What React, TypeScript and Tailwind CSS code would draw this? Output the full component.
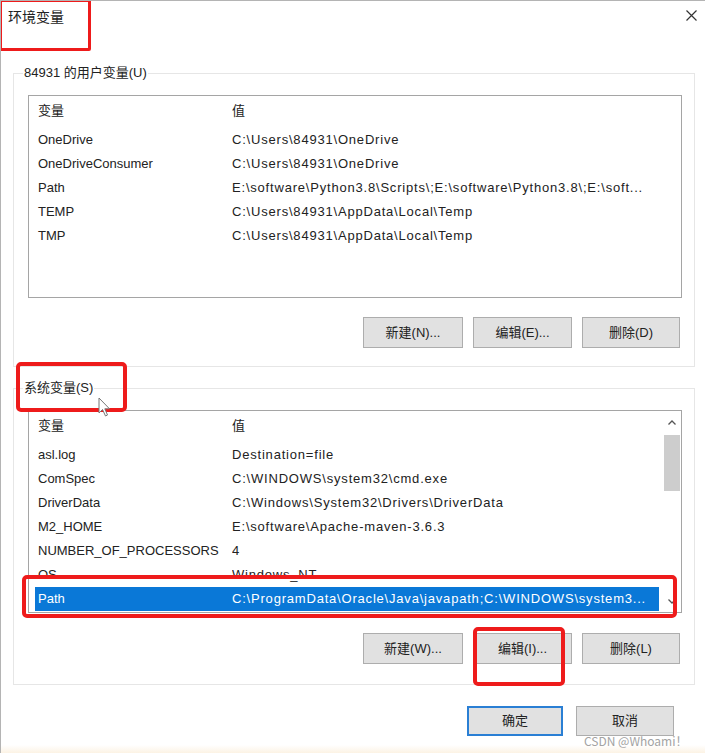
const userVars = [
  { name: "OneDrive", value: "C:\\Users\\84931\\OneDrive" },
  { name: "OneDriveConsumer", value: "C:\\Users\\84931\\OneDrive" },
  { name: "Path", value: "E:\\software\\Python3.8\\Scripts\\;E:\\software\\Python3.8\\;E:\\soft..." },
  { name: "TEMP", value: "C:\\Users\\84931\\AppData\\Local\\Temp" },
  { name: "TMP", value: "C:\\Users\\84931\\AppData\\Local\\Temp" },
];

const systemVars = [
  { name: "asl.log", value: "Destination=file" },
  { name: "ComSpec", value: "C:\\WINDOWS\\system32\\cmd.exe" },
  { name: "DriverData", value: "C:\\Windows\\System32\\Drivers\\DriverData" },
  { name: "M2_HOME", value: "E:\\software\\Apache-maven-3.6.3" },
  { name: "NUMBER_OF_PROCESSORS", value: "4" },
  { name: "OS", value: "Windows_NT" },
  { name: "Path", value: "C:\\ProgramData\\Oracle\\Java\\javapath;C:\\WINDOWS\\system3...", selected: true },
];

interface VarRow {
  name: string;
  value: string;
  selected?: boolean;
}

function ListView({ rows, scroll }: { rows: VarRow[]; scroll?: boolean }) {
  return (
    <div className="h-[203px] border border-[#a5a5a5] bg-white flex">
      <div className="flex-1 min-w-0 pt-[2px]">
        <div className="h-[26px] flex items-center ml-[6px] pl-[3px]">
          <span className="w-[194px] shrink-0">变量</span>
          <span>值</span>
        </div>
        <div className="mt-[4px]">
          {rows.map((r) => (
            <div
              key={r.name}
              className={`h-[24px] flex items-center ml-[6px] mr-[4px] pl-[3px] ${
                r.selected ? "bg-[#0a78d7] text-white" : ""
              }`}
            >
              <span className="w-[194px] shrink-0 whitespace-nowrap">{r.name}</span>
              <span className="flex-1 min-w-0 whitespace-nowrap overflow-hidden tracking-[0.8px]">{r.value}</span>
            </div>
          ))}
        </div>
      </div>
      {scroll && (
        <div className="w-[18px] shrink-0 flex flex-col items-center">
          <div className="h-[22px] flex items-center justify-center">
            <svg width="8" height="5" viewBox="0 0 8 5">
              <path d="M0.5 4.5 L4 1 L7.5 4.5" fill="none" stroke="#555" strokeWidth="1.3" />
            </svg>
          </div>
          <div className="mt-[2px] h-[56px] w-[16px] bg-[#cdcdcd]" />
          <div className="flex-1" />
          <div className="h-[22px] flex items-center justify-center">
            <svg width="8" height="5" viewBox="0 0 8 5">
              <path d="M0.5 0.5 L4 4 L7.5 0.5" fill="none" stroke="#555" strokeWidth="1.3" />
            </svg>
          </div>
        </div>
      )}
    </div>
  );
}

function Btn({ label, w = "w-[99px]" }: { label: string; w?: string }) {
  return (
    <button className={`${w} h-[31px] bg-[#e1e1e1] border border-[#adadad] text-[13px] text-[#222]`}>
      {label}
    </button>
  );
}

export default function App() {
  return (
    <div className="w-[705px] h-[753px] bg-white border-l border-t border-[#b4b4b4] relative overflow-hidden font-['Liberation_Sans','Noto_Sans_CJK_SC',sans-serif] text-[13px] text-[#222]">
      {/* title bar */}
      <div className="h-[63px] flex justify-between pl-[7px] pr-[8px] pt-[6px]">
        <span className="text-[14px] leading-[20px]">环境变量</span>
        <svg width="11" height="11" viewBox="0 0 11 11" className="mt-[3px]">
          <path d="M0.5 0.5 L10.5 10.5 M10.5 0.5 L0.5 10.5" stroke="#333" strokeWidth="1.2" />
        </svg>
      </div>

      {/* user variables */}
      <fieldset className="ml-[12px] mr-[10px] border border-[#e6e6e6] pl-[14px] pr-[12px] pt-[13px] pb-[18px]">
        <legend className="ml-[-5px] px-[1px] leading-[18px]">84931 的用户变量(U)</legend>
        <ListView rows={userVars} />
        <div className="flex justify-end gap-[10px] mt-[19px] mr-[2px]">
          <Btn label="新建(N)..." w="w-[100px]" />
          <Btn label="编辑(E)..." />
          <Btn label="删除(D)" w="w-[98px]" />
        </div>
      </fieldset>

      {/* system variables */}
      <fieldset className="mt-[12px] ml-[12px] mr-[10px] border border-[#e6e6e6] pl-[14px] pr-[12px] pt-[13px] pb-[20px]">
        <legend className="ml-[-5px] px-[1px] leading-[18px]">系统变量(S)</legend>
        <ListView rows={systemVars} scroll />
        <div className="flex justify-end gap-[10px] mt-[20px] mr-[2px]">
          <Btn label="新建(W)..." w="w-[100px]" />
          <Btn label="编辑(I)..." />
          <Btn label="删除(L)" w="w-[98px]" />
        </div>
      </fieldset>

      {/* dialog buttons */}
      <div className="flex justify-end gap-[13px] mt-[21px] pr-[31px]">
        <button className="w-[96px] h-[30px] bg-[#e1e1e1] border-2 border-[#2a7fd4] text-[13px]">确定</button>
        <button className="w-[98px] h-[30px] bg-[#e1e1e1] border border-[#adadad] text-[13px]">取消</button>
      </div>

      <div className="absolute left-0 right-0 bottom-0 h-[8px] bg-gradient-to-b from-white to-[#fcf3e4]" />

      {/* annotations over the screenshot */}
      <div className="absolute left-[-2px] top-[-2px] w-[92px] h-[52px] border-[3px] border-[#ee1b1b] rounded-[2px]" />
      <div className="absolute left-[15px] top-[361px] w-[111px] h-[50px] border-4 border-[#ee1b1b] rounded-[5px]" />
      <div className="absolute left-[21px] top-[574px] w-[655px] h-[43px] border-4 border-[#ee1b1b] rounded-[5px]" />
      <div className="absolute left-[472px] top-[626px] w-[92px] h-[59px] border-4 border-[#ee1b1b] rounded-[5px]" />

      {/* mouse cursor */}
      <svg className="absolute left-[97px] top-[396px]" width="13" height="20" viewBox="0 0 13 20">
        <path d="M1 1 L1 16 L4.5 12.5 L7.5 19 L9.5 18 L6.8 11.8 L11.5 11.8 Z" fill="#fff" stroke="#777" strokeWidth="1" />
      </svg>

      <span className="absolute left-[583px] top-[732px] leading-[16px] text-[12px] text-[#a3a3a3] font-['Noto_Sans_CJK_SC',sans-serif]">
        CSDN @Whoami！
      </span>
    </div>
  );
}
